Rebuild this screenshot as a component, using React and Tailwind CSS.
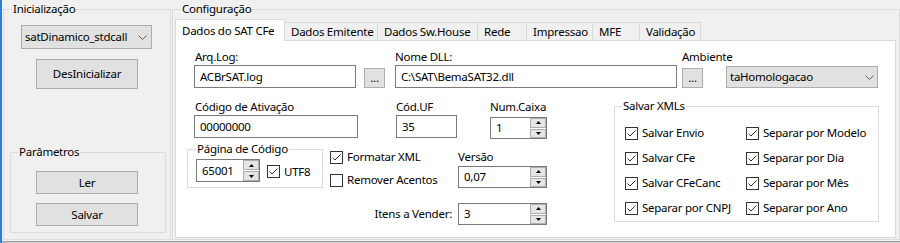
import React from 'react';

function Btn({ children, className = '' }) {
  return (
    <button className={`flex items-center justify-center bg-[#e1e1e1] border border-[#adadad] leading-[16px] tracking-[-0.25px] ${className}`}>
      {children}
    </button>
  );
}

function Input({ value, className = '' }) {
  return (
    <div className={`flex items-center border border-[#7a7a7a] bg-white pl-[5px] whitespace-nowrap ${className}`}>
      {value}
    </div>
  );
}

function Combo({ value, className = '' }) {
  return (
    <div className={`flex items-center justify-between bg-[#e1e1e1] border border-[#adadad] whitespace-nowrap ${className}`}>
      <span>{value}</span>
      <svg width="9" height="5" viewBox="0 0 9 5">
        <path d="M0.5 0.5 L4.5 4.5 L8.5 0.5" fill="none" stroke="#606060" />
      </svg>
    </div>
  );
}

function Arrow({ down }) {
  return (
    <svg width="5" height="3" viewBox="0 0 5 3">
      <path d={down ? 'M0 0 L5 0 L2.5 3 Z' : 'M0 3 L5 3 L2.5 0 Z'} fill="#000" />
    </svg>
  );
}

function Spin({ value, className = '' }) {
  return (
    <div className={`flex border border-[#7a7a7a] bg-white ${className}`}>
      <div className="flex-1 pl-[5px] flex items-center">{value}</div>
      <div className="w-[16px] flex flex-col gap-px">
        <div className="flex-1 bg-[#e5e5e5] border border-[#adadad] flex items-center justify-center">
          <Arrow />
        </div>
        <div className="flex-1 bg-[#e5e5e5] border border-[#adadad] flex items-center justify-center">
          <Arrow down />
        </div>
      </div>
    </div>
  );
}

function Check({ label, checked = true, className = '' }) {
  return (
    <div className={`flex items-center gap-[4px] h-[16px] whitespace-nowrap ${className}`}>
      <div className="w-[13px] h-[13px] shrink-0 border border-[#333333] bg-white flex items-center justify-center">
        {checked && (
          <svg width="11" height="11" viewBox="0 0 11 11">
            <path d="M1.5 5.5 L4 8 L9.5 2.5" fill="none" stroke="#333333" strokeWidth="1" />
          </svg>
        )}
      </div>
      <span>{label}</span>
    </div>
  );
}

const tabs = [
  { name: 'Dados Emitente', w: 'w-[93px]' },
  { name: 'Dados Sw.House', w: 'w-[100px]' },
  { name: 'Rede', w: 'w-[49px]' },
  { name: 'Impressao', w: 'w-[66px]' },
  { name: 'MFE', w: 'w-[47px]' },
  { name: 'Validação', w: 'w-[61px]' },
];

export default function App() {
  return (
    <div className="w-[900px] h-[243px] bg-[#f0f0f0] flex flex-col border-l-2 border-[#2f7fd1] text-[11.5px] tracking-[-0.25px] leading-[16px] text-black font-['Noto_Sans',sans-serif] overflow-hidden">
      <div className="flex h-[241px]">
        {/* Inicialização */}
        <fieldset className="ml-[1px] mt-[1px] w-[168px] h-[239px] border border-[#dcdcdc] flex flex-col items-start">
          <legend className="ml-[8px] px-[1px]">Inicialização</legend>
          <Combo className="ml-[17px] mt-[8px] w-[131px] h-[24px] pl-[3px] pr-[4px]" value="satDinamico_stdcall" />
          <Btn className="ml-[32px] mt-[10px] w-[102px] h-[30px]">DesInicializar</Btn>
          <fieldset className="ml-[6px] mt-[55px] w-[156px] h-[89px] border border-[#dcdcdc] flex flex-col items-start">
            <legend className="ml-[7px] px-[1px]">Parâmetros</legend>
            <Btn className="ml-[25px] mt-[11px] w-[102px] h-[23px]">Ler</Btn>
            <Btn className="ml-[25px] mt-[9px] w-[102px] h-[23px]">Salvar</Btn>
          </fieldset>
        </fieldset>

        {/* Configuração */}
        <fieldset className="ml-[1px] mt-[1px] w-[728px] h-[239px] border border-[#dcdcdc]">
          <legend className="ml-[8px] px-[1px]">Configuração</legend>
          <div className="ml-[2px] mt-[2px]">
            <div className="flex items-end h-[21px]">
              <div className="relative z-10 -mb-px h-[22px] w-[110px] bg-white border border-b-0 border-[#d9d9d9] pl-[6px] pt-[3px] whitespace-nowrap">
                Dados do SAT CFe
              </div>
              {tabs.map(t => (
                <div
                  key={t.name}
                  className={`h-[18px] ${t.w} border-t border-r border-[#d9d9d9] pl-[6px] flex items-center whitespace-nowrap`}
                >
                  {t.name}
                </div>
              ))}
            </div>
            <div className="w-[721px] h-[198px] bg-white border border-[#d9d9d9]">
              {/* linha 1 */}
              <div className="ml-[18px] mt-[8px] grid grid-cols-[170px_31px_287px_44px_152px] grid-rows-[16px_23px] items-end">
                <div className="pl-[1px]">Arq.Log:</div>
                <div></div>
                <div>Nome DLL:</div>
                <div className="col-span-2">Ambiente</div>
                <Input className="w-[162px] h-[23px]" value="ACBrSAT.log" />
                <Btn className="w-[21px] h-[20px]">...</Btn>
                <Input className="w-[282px] h-[23px]" value="C:\SAT\BemaSAT32.dll" />
                <Btn className="w-[21px] h-[20px]">...</Btn>
                <Combo className="w-[152px] h-[22px] pl-[3px] pr-[3px]" value="taHomologacao" />
              </div>

              <div className="flex items-start">
                <div className="w-[371px] flex flex-col">
                  {/* linha 2 */}
                  <div className="ml-[18px] mt-[11px] grid grid-cols-[202px_94px_57px] grid-rows-[16px_24px]">
                    <div className="pl-[1px] self-end">Código de Ativação</div>
                    <div className="self-end">Cód.UF</div>
                    <div className="self-end">Num.Caixa</div>
                    <Input className="w-[164px] h-[23px] self-start" value="00000000" />
                    <Input className="w-[61px] h-[23px] self-start" value="35" />
                    <Spin className="w-[57px] h-[22px] self-end" value="1" />
                  </div>

                  {/* linha 3 */}
                  <div className="ml-[11px] mt-[2px] flex items-start">
                    <fieldset className="w-[136px] h-[47px] border border-[#dcdcdc]">
                      <legend className="ml-[8px] px-[1px]">Página de Código</legend>
                      <div className="ml-[8px] mt-[2px] flex items-center gap-[7px]">
                        <Spin className="w-[64px] h-[23px]" value="65001" />
                        <Check className="mt-[2px]" label="UTF8" />
                      </div>
                    </fieldset>
                    <div className="ml-[7px] mt-[8px] w-[128px] flex flex-col gap-[7px]">
                      <Check label="Formatar XML" />
                      <Check label="Remover Acentos" checked={false} />
                    </div>
                    <div className="mt-[8px] w-[89px] flex flex-col">
                      <div>Versão</div>
                      <Spin className="mt-[1px] w-[89px] h-[22px]" value="0,07" />
                    </div>
                  </div>

                  {/* linha 4 */}
                  <div className="mt-[15px] flex justify-end items-center gap-[6px]">
                    <div>Itens a Vender:</div>
                    <Spin className="w-[89px] h-[22px]" value="3" />
                  </div>
                </div>

                <fieldset className="ml-[67px] mt-[10px] w-[265px] h-[124px] border border-[#dcdcdc]">
                  <legend className="ml-[7px] px-[1px]">Salvar XMLs</legend>
                  <div className="ml-[10px] mt-[11px] grid grid-cols-[121px_auto] gap-y-[9px]">
                    <Check label="Salvar Envio" />
                    <Check label="Separar por Modelo" />
                    <Check label="Salvar CFe" />
                    <Check label="Separar por Dia" />
                    <Check label="Salvar CFeCanc" />
                    <Check label="Separar por Mês" />
                    <Check label="Separar por CNPJ" />
                    <Check label="Separar por Ano" />
                  </div>
                </fieldset>
              </div>
            </div>
          </div>
        </fieldset>
      </div>
      <div className="h-px bg-[#a0a0a0]"></div>
      <div className="h-px bg-[#c8c8c8]"></div>
    </div>
  );
}
